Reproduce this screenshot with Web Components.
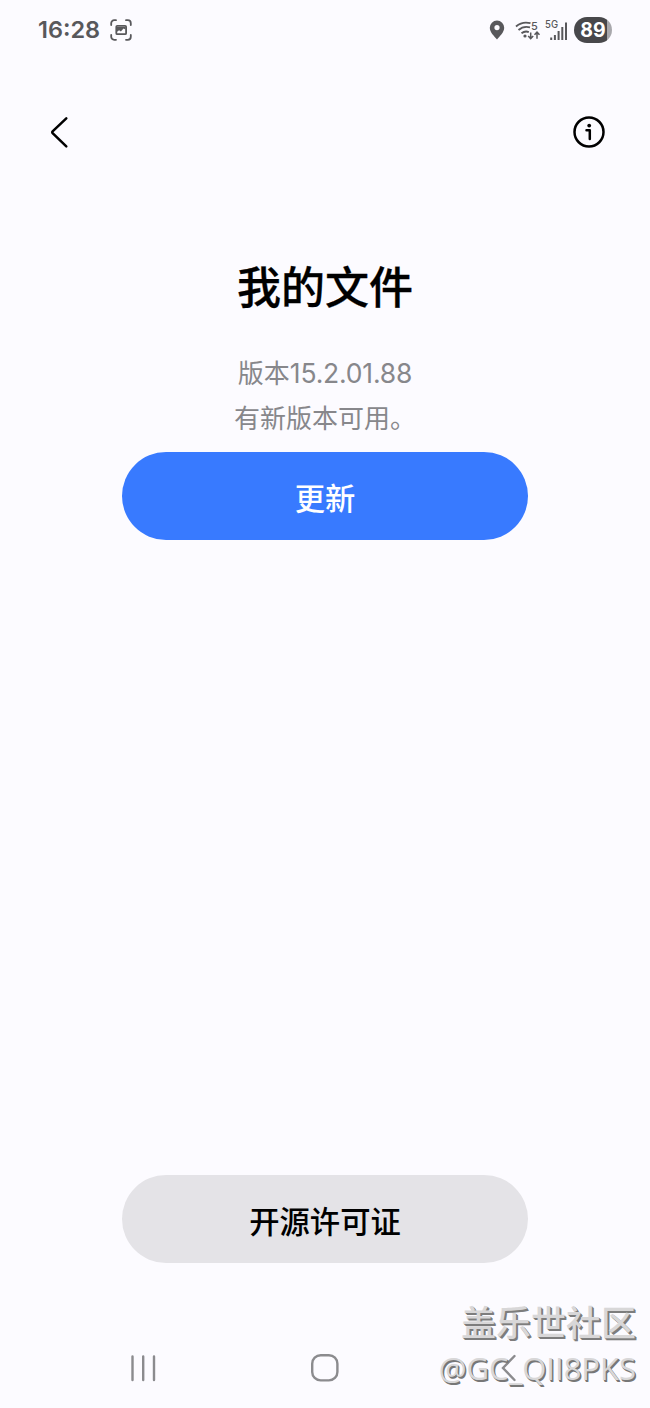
<!DOCTYPE html>
<html lang="zh-CN">
<head>
<meta charset="UTF-8">
<title>我的文件</title>
<style>
    html, body {
        margin: 0;
        height: 100%;
    }
    body {
        background: #fcfbff;
        font-family: "Inter", "Noto Sans CJK SC", sans-serif;
        overflow: hidden;
    }
</style>
</head>
<body>
<about-screen>
    <status-bar slot="status" time="16:28" battery="89"></status-bar>
    <app-header slot="header"></app-header>
    <app-info slot="info" name="我的文件">
        <span slot="version">版本<span style="font-size: 26.5px; letter-spacing: -0.2px">15.2.01.88</span></span>
        <span slot="message">有新版本可用。</span>
    </app-info>
    <pill-button slot="primary" kind="primary">更新</pill-button>
    <pill-button slot="secondary">开源许可证</pill-button>
    <nav-bar slot="nav"></nav-bar>
    <water-mark slot="mark" site="盖乐世社区" user="@GC_QII8PKS"></water-mark>
</about-screen>

<script>
class AboutScreen extends HTMLElement {
    constructor() {
        super();
        this.attachShadow({ mode: 'open' });
        this.shadowRoot.innerHTML = `
            <style>
                :host {
                    display: flex;
                    flex-direction: column;
                    position: relative;
                    width: 650px;
                    height: 1408px;
                    overflow: hidden;
                    background: #fcfbff;
                }
                main {
                    flex: 1;
                    display: flex;
                    flex-direction: column;
                    align-items: center;
                }
                .spacer {
                    flex: 1;
                }
                ::slotted(water-mark) {
                    position: absolute;
                    right: 14px;
                    bottom: 18px;
                }
            </style>
            <slot name="status"></slot>
            <slot name="header"></slot>
            <main>
                <slot name="info"></slot>
                <slot name="primary"></slot>
                <div class="spacer"></div>
                <slot name="secondary"></slot>
            </main>
            <slot name="nav"></slot>
            <slot name="mark"></slot>
        `;
    }
}
customElements.define('about-screen', AboutScreen);

class StatusBar extends HTMLElement {
    constructor() {
        super();
        this.attachShadow({ mode: 'open' });
        this.shadowRoot.innerHTML = `
            <style>
                :host {
                    display: flex;
                    align-items: center;
                    box-sizing: border-box;
                    height: 60px;
                    padding: 0 38px;
                    color: #58585b;
                }
                svg {
                    display: block;
                }
                .time {
                    width: 72px;
                    font-size: 23.5px;
                    font-weight: 600;
                    line-height: 62px;
                }
                .right {
                    margin-left: auto;
                    display: flex;
                    align-items: center;
                }
                .battery {
                    width: 38px;
                    height: 26px;
                    border-radius: 13px;
                    background: linear-gradient(90deg, #48484b 33px, #a8a8ac 33px);
                    color: #fff;
                    font-size: 19.5px;
                    font-weight: 700;
                    line-height: 27px;
                    text-align: center;
                }
            </style>
            <span class="time"></span>
            <svg width="22" height="22" viewBox="0 0 22 22" fill="none" stroke="currentColor" stroke-width="1.8" stroke-linecap="round">
                <path d="M1.2 6V4.2a3 3 0 0 1 3-3H6M16 1.2h1.8a3 3 0 0 1 3 3V6M20.8 16v1.8a3 3 0 0 1-3 3H16M6 20.8H4.2a3 3 0 0 1-3-3V16"/>
                <rect x="6.3" y="6.8" width="9.8" height="8.4" rx="1"/>
                <path d="M7 8h8.5v2.6l-2-1-2.6 2.8-1.8-1.2L7 12.8z" fill="currentColor" stroke="none"/>
            </svg>
            <div class="right">
                <svg width="86" height="28" viewBox="488 16 86 28" fill="none" stroke="currentColor">
                    <path fill="currentColor" stroke="none" fill-rule="evenodd" d="M497 20.5a7.2 7.2 0 0 0-7.2 7.3c0 4.7 4.6 8.5 7.2 11.7 2.6-3.2 7.2-7 7.2-11.7a7.2 7.2 0 0 0-7.2-7.3zm0 4.5a2.6 2.6 0 1 1 0 5.2 2.6 2.6 0 0 1 0-5.2z"/>
                    <g stroke-width="1.8">
                        <path d="M516 26.5q6.5-5.6 14.5-3.3M518.5 30q5-4.4 11.5-2.6M521.5 33.3q3.5-2.8 7.3-1.2"/>
                    </g>
                    <circle cx="525" cy="36" r="1.6" fill="currentColor" stroke="none"/>
                    <path stroke-width="1.5" d="M530.7 32.5v6M528.2 36l2.5 2.6 2.5-2.6M537 38.8v-6.3M534.5 34.8l2.5-2.6 2.5 2.6"/>
                    <text x="531" y="30" font-size="11" font-weight="500" fill="currentColor" stroke="none">5</text>
                    <text x="545" y="28" font-size="10.5" font-weight="500" textLength="13" lengthAdjust="spacingAndGlyphs" fill="currentColor" stroke="none">5G</text>
                    <path stroke-width="2" d="M551.2 37.5V40M554.9 35V40M558.6 31v9M562.3 27v13M566 22.5V40"/>
                </svg>
                <div class="battery"></div>
            </div>
        `;
    }
    connectedCallback() {
        this.shadowRoot.querySelector('.time').textContent = this.getAttribute('time') || '';
        this.shadowRoot.querySelector('.battery').textContent = this.getAttribute('battery') || '';
    }
}
customElements.define('status-bar', StatusBar);

class AppHeader extends HTMLElement {
    constructor() {
        super();
        this.attachShadow({ mode: 'open' });
        this.shadowRoot.innerHTML = `
            <style>
                :host {
                    display: flex;
                    align-items: center;
                    justify-content: space-between;
                    box-sizing: border-box;
                    height: 144px;
                    padding: 0 44px 0 48px;
                    color: #000;
                }
                svg {
                    display: block;
                }
            </style>
            <svg width="24" height="36" viewBox="0 0 24 36" fill="none" stroke="currentColor" stroke-width="2.5" stroke-linecap="round" stroke-linejoin="round">
                <path d="M18.3 4.3 4.6 17.4a1.2 1.2 0 0 0 0 1.7L18.3 32.3"/>
            </svg>
            <svg width="34" height="34" viewBox="0 0 34 34" fill="none" stroke="currentColor" stroke-width="2.5" stroke-linecap="round" stroke-linejoin="round">
                <circle cx="17" cy="17" r="14.5"/>
                <path d="M14.5 15.3h3.3v8.8"/>
                <circle cx="17.2" cy="10.6" r="1.9" fill="currentColor" stroke="none"/>
            </svg>
        `;
    }
}
customElements.define('app-header', AppHeader);

class AppInfo extends HTMLElement {
    constructor() {
        super();
        this.attachShadow({ mode: 'open' });
        this.shadowRoot.innerHTML = `
            <style>
                :host {
                    display: flex;
                    flex-direction: column;
                    align-items: center;
                    height: 248px;
                    color: #87878b;
                    font-size: 26px;
                }
                h1 {
                    margin: 52px 0 31px;
                    font-size: 44px;
                    font-weight: 500;
                    line-height: 64px;
                    color: #000;
                    -webkit-text-stroke: 0.3px #000;
                }
                .line {
                    height: 45px;
                    line-height: 45px;
                    white-space: nowrap;
                }
            </style>
            <h1></h1>
            <div class="line"><slot name="version"></slot></div>
            <div class="line"><slot name="message"></slot></div>
        `;
    }
    connectedCallback() {
        this.shadowRoot.querySelector('h1').textContent = this.getAttribute('name') || '';
    }
}
customElements.define('app-info', AppInfo);

class PillButton extends HTMLElement {
    constructor() {
        super();
        this.attachShadow({ mode: 'open' });
        this.shadowRoot.innerHTML = `
            <style>
                :host {
                    display: block;
                    width: 406px;
                    height: 88px;
                }
                button {
                    display: block;
                    width: 100%;
                    height: 100%;
                    padding: 2px 0 0;
                    border: 0;
                    border-radius: 44px;
                    background: #e4e3e7;
                    color: #000;
                    font: 500 30.3px "Noto Sans CJK SC", sans-serif;
                }
                :host([kind="primary"]) button {
                    background: #387aff;
                    color: #fff;
                }
            </style>
            <button><slot></slot></button>
        `;
    }
}
customElements.define('pill-button', PillButton);

class NavBar extends HTMLElement {
    constructor() {
        super();
        this.attachShadow({ mode: 'open' });
        this.shadowRoot.innerHTML = `
            <style>
                :host {
                    display: grid;
                    grid-template-columns: repeat(3, 182px);
                    justify-content: center;
                    justify-items: center;
                    align-items: center;
                    height: 81px;
                    margin-top: 64px;
                    color: #8b8b8e;
                }
                svg {
                    display: block;
                }
            </style>
            <svg width="30" height="30" viewBox="0 0 30 30" fill="none" stroke="currentColor" stroke-width="2.4" stroke-linecap="round">
                <path d="M4.5 3.5v23.5M15.2 3.5v23.5M26 3.5v23.5"/>
            </svg>
            <svg width="30" height="30" viewBox="0 0 30 30" fill="none" stroke="currentColor" stroke-width="2.4">
                <rect x="2.2" y="2.2" width="25.2" height="25.2" rx="8.5"/>
            </svg>
            <svg width="20" height="30" viewBox="0 0 20 30" fill="none" stroke="currentColor" stroke-width="2.4" stroke-linecap="round">
                <path d="M17.5 3 6 15l11.5 12"/>
            </svg>
        `;
    }
}
customElements.define('nav-bar', NavBar);

class WaterMark extends HTMLElement {
    constructor() {
        super();
        this.attachShadow({ mode: 'open' });
        this.shadowRoot.innerHTML = `
            <style>
                :host {
                    display: flex;
                    flex-direction: column;
                    align-items: flex-end;
                    white-space: nowrap;
                    color: #d8d7d8;
                }
                .site {
                    font-family: "Noto Sans CJK SC", sans-serif;
                    font-size: 35px;
                    font-weight: 500;
                    line-height: 50px;
                    text-shadow: 1px 1px 0 #7d7d7d, 2px 2px 0 #7d7d7d;
                }
                .user {
                    font-family: "Open Sans", sans-serif;
                    font-size: 31px;
                    line-height: 44px;
                    text-shadow: 1px 1px 0 #777, 1.5px 1.5px 0 #777;
                }
            </style>
            <span class="site"></span>
            <span class="user"></span>
        `;
    }
    connectedCallback() {
        this.shadowRoot.querySelector('.site').textContent = this.getAttribute('site') || '';
        this.shadowRoot.querySelector('.user').textContent = this.getAttribute('user') || '';
    }
}
customElements.define('water-mark', WaterMark);
</script>
</body>
</html>
